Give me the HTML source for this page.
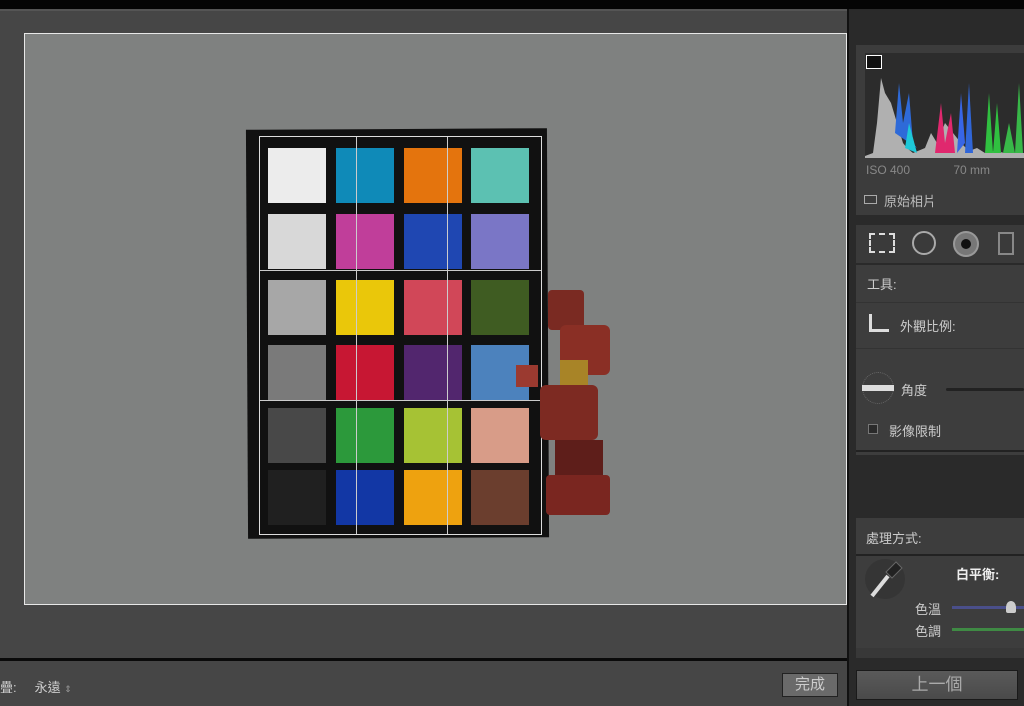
<!DOCTYPE html>
<html><head><meta charset="utf-8"><style>
*{margin:0;padding:0;box-sizing:border-box}
body{width:1024px;height:706px;overflow:hidden;background:#464646;position:relative;font-family:"Liberation Sans","Noto Sans CJK TC",sans-serif;color:#cfcfcf;font-size:13px}
.a{position:absolute}
.p{position:absolute;width:58px;height:55px}
</style></head><body>
<div class="a" style="left:0;top:0;width:1024px;height:9px;background:#050505"></div>
<div class="a" style="left:0;top:9px;width:848px;height:2px;background:#555"></div>
<!-- photo -->
<div class="a" style="left:24px;top:33px;width:823px;height:572px;background:#7f8180;border:1px solid #e8e8e8"></div>
<!-- chart -->
<div class="a" style="left:247px;top:129px;width:301px;height:409px;background:#111;transform:rotate(-0.3deg)"></div>
<div class="a" style="left:259px;top:136px;width:283px;height:399px;border:1px solid #ddd"></div>
<div class="p" style="left:268px;top:148px;background:#ececec"></div>
<div class="p" style="left:336px;top:148px;background:#0f8ab8"></div>
<div class="p" style="left:404px;top:148px;background:#e4740d"></div>
<div class="p" style="left:471px;top:148px;background:#5cc1b2"></div>
<div class="p" style="left:268px;top:214px;background:#d8d8d8"></div>
<div class="p" style="left:336px;top:214px;background:#c03e9a"></div>
<div class="p" style="left:404px;top:214px;background:#1f47b2"></div>
<div class="p" style="left:471px;top:214px;background:#7a76c6"></div>
<div class="p" style="left:268px;top:280px;background:#a7a7a7"></div>
<div class="p" style="left:336px;top:280px;background:#eac70a"></div>
<div class="p" style="left:404px;top:280px;background:#d14758"></div>
<div class="p" style="left:471px;top:280px;background:#3f5c22"></div>
<div class="p" style="left:268px;top:345px;background:#7a7a7a"></div>
<div class="p" style="left:336px;top:345px;background:#c71733"></div>
<div class="p" style="left:404px;top:345px;background:#52266e"></div>
<div class="p" style="left:471px;top:345px;background:#4c82bd"></div>
<div class="p" style="left:268px;top:408px;background:#484848"></div>
<div class="p" style="left:336px;top:408px;background:#2c993b"></div>
<div class="p" style="left:404px;top:408px;background:#a6c234"></div>
<div class="p" style="left:471px;top:408px;background:#d89c88"></div>
<div class="p" style="left:268px;top:470px;background:#202020"></div>
<div class="p" style="left:336px;top:470px;background:#1237a5"></div>
<div class="p" style="left:404px;top:470px;background:#eea20f"></div>
<div class="p" style="left:471px;top:470px;background:#6b3e2e"></div>
<div class="a" style="left:356px;top:137px;width:1px;height:397px;background:#ccc"></div>
<div class="a" style="left:447px;top:137px;width:1px;height:397px;background:#ccc"></div>
<div class="a" style="left:260px;top:270px;width:281px;height:1px;background:#ccc"></div>
<div class="a" style="left:260px;top:400px;width:281px;height:1px;background:#ccc"></div>
<!-- robot -->
<div class="a" style="left:548px;top:290px;width:36px;height:40px;background:#7a2a22;border-radius:4px"></div>
<div class="a" style="left:560px;top:325px;width:50px;height:50px;background:#8a2f25;border-radius:6px"></div>
<div class="a" style="left:560px;top:360px;width:28px;height:40px;background:#a88427"></div>
<div class="a" style="left:540px;top:385px;width:58px;height:55px;background:#7d2a22;border-radius:6px"></div>
<div class="a" style="left:516px;top:365px;width:22px;height:22px;background:#9b3a30"></div>
<div class="a" style="left:555px;top:440px;width:48px;height:40px;background:#5e1e1a"></div>
<div class="a" style="left:546px;top:475px;width:64px;height:40px;background:#7a2620;border-radius:4px"></div>
<!-- bottom toolbar -->
<div class="a" style="left:0;top:658px;width:848px;height:3px;background:#0a0a0a"></div>
<div class="a" style="left:0;top:677px;font-size:13px;color:#ccc">疊: &nbsp;&nbsp;&nbsp;&nbsp;永遠 <span style="font-size:9px;color:#999">⇕</span></div>
<div class="a" style="left:782px;top:673px;width:56px;height:24px;background:#6a6a6a;border:1px solid #222;color:#ccc;font-size:15px;text-align:center;line-height:22px">完成</div>
<!-- right panel -->
<div class="a" style="left:847px;top:9px;width:177px;height:697px;background:#2a2a2a;border-left:2px solid #111"></div>
<div class="a" style="left:856px;top:45px;width:168px;height:170px;background:#3c3c3c"></div>
<div class="a" style="left:865px;top:53px;width:159px;height:105px;background:#2c2c2c"></div>
<svg class="a" style="left:865px;top:53px" width="159" height="105" viewBox="0 0 159 105">
<path d="M0 103 L8 100 L12 70 L16 25 L20 40 L26 50 L32 70 L38 90 L42 95 L48 100 L60 95 L66 80 L72 90 L80 70 L88 80 L96 90 L104 98 L112 95 L120 100 L130 98 L140 100 L159 100 L159 105 L0 105Z" fill="#b0b0b0"/>
<path d="M30 80 L34 30 L38 70 L44 40 L48 90 L52 95Z" fill="#2e6ad8"/>
<path d="M40 95 L44 70 L48 85 L52 100Z" fill="#1ec8d8"/>
<path d="M70 100 L76 50 L80 90 L86 60 L90 100Z" fill="#e0286e"/>
<path d="M92 100 L96 40 L100 90Z" fill="#3866e6"/>
<path d="M100 100 L104 30 L108 100Z" fill="#3066d8"/>
<path d="M120 100 L124 40 L128 100 M128 100 L132 50 L136 100Z" fill="#30c040"/>
<path d="M138 100 L144 70 L150 100 M150 100 L154 30 L158 100Z" fill="#38b848"/>
</svg>
<div class="a" style="left:866px;top:55px;width:16px;height:14px;border:1px solid #fff;background:#111"></div>
<div class="a" style="left:866px;top:163px;font-size:12px;color:#888">ISO 400 &nbsp;&nbsp;&nbsp;&nbsp;&nbsp;&nbsp;&nbsp;&nbsp;&nbsp;&nbsp;&nbsp;&nbsp;70 mm</div>
<div class="a" style="left:864px;top:195px;width:13px;height:9px;border:1px solid #aaa"></div>
<div class="a" style="left:884px;top:191px;color:#bbb">原始相片</div>
<div class="a" style="left:856px;top:225px;width:168px;height:38px;background:#3a3a3a"></div>
<div class="a" style="left:869px;top:233px;width:26px;height:20px;border:2px dashed #ddd"></div>
<div class="a" style="left:912px;top:231px;width:24px;height:24px;border:2px solid #aaa;border-radius:50%"></div>
<div class="a" style="left:953px;top:231px;width:26px;height:26px;background:#777;border-radius:50%;border:2px solid #999"><div style="margin:6px;width:10px;height:10px;border-radius:50%;background:#111"></div></div>
<div class="a" style="left:998px;top:232px;width:16px;height:23px;border:2px solid #888"></div>
<div class="a" style="left:856px;top:265px;width:168px;height:190px;background:#3d3d3d"></div>
<div class="a" style="left:856px;top:302px;width:168px;height:1px;background:#333"></div>
<div class="a" style="left:856px;top:348px;width:168px;height:1px;background:#333"></div>
<div class="a" style="left:856px;top:450px;width:168px;height:2px;background:#222"></div>
<div class="a" style="left:867px;top:274px;color:#ccc">工具:</div>
<div class="a" style="left:869px;top:314px;width:20px;height:18px;border-left:3px solid #ddd;border-bottom:3px solid #ddd"></div>
<div class="a" style="left:900px;top:316px;color:#ccc">外觀比例:</div>
<div class="a" style="left:862px;top:372px;width:32px;height:32px;border:1px dotted #666;border-radius:50%"></div>
<div class="a" style="left:862px;top:385px;width:32px;height:6px;background:#ddd"></div>
<div class="a" style="left:901px;top:380px;color:#ccc">角度</div>
<div class="a" style="left:946px;top:388px;width:78px;height:3px;background:#222;border-radius:2px"></div>
<div class="a" style="left:868px;top:424px;width:10px;height:10px;border:1px solid #777;background:#2a2a2a"></div>
<div class="a" style="left:889px;top:421px;color:#ccc">影像限制</div>
<div class="a" style="left:856px;top:518px;width:168px;height:130px;background:#3d3d3d"></div>
<div class="a" style="left:856px;top:554px;width:168px;height:2px;background:#222"></div>
<div class="a" style="left:866px;top:528px;color:#ccc">處理方式:</div>
<svg class="a" style="left:864px;top:558px" width="42" height="42"><circle cx="21" cy="21" r="20" fill="#353535"/><path d="M8 38 L24 18" stroke="#ddd" stroke-width="4"/><path d="M22 14 L32 4 L38 10 L28 20Z" fill="#222" stroke="#666"/></svg>
<div class="a" style="left:956px;top:564px;color:#eee;font-weight:bold">白平衡:</div>
<div class="a" style="left:915px;top:599px;color:#ccc">色溫</div>
<div class="a" style="left:952px;top:606px;width:72px;height:3px;background:#4a4f8a"></div>
<div class="a" style="left:1006px;top:601px;width:10px;height:12px;background:#ccc;border-radius:50% 50% 2px 2px"></div>
<div class="a" style="left:915px;top:621px;color:#ccc">色調</div>
<div class="a" style="left:952px;top:628px;width:72px;height:3px;background:#3f8a44"></div>
<div class="a" style="left:856px;top:648px;width:168px;height:10px;background:#383838"></div>
<div class="a" style="left:856px;top:670px;width:162px;height:30px;background:linear-gradient(#5a5a5a,#4a4a4a);border:1px solid #1a1a1a;color:#aaa;font-size:17px;text-align:center;line-height:28px">上一個</div>
</body></html>
